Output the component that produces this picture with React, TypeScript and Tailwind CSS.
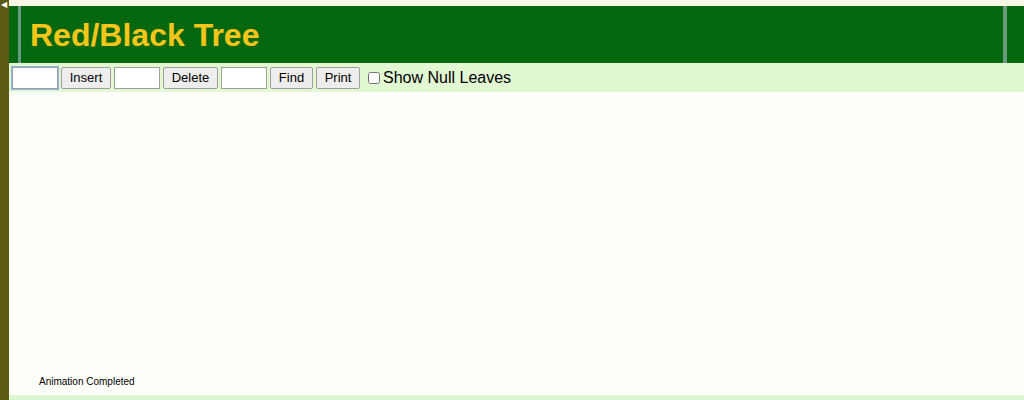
export default function App() {
  const inputCls =
    "w-[46px] h-[22px] border border-[#a0a0a0] bg-white px-1 text-[13px] outline-none";
  const btnCls =
    "h-[22px] border border-[#a0a0a0] rounded-[2px] bg-[#ededed] text-[13px] text-black leading-none";

  return (
    <div className="flex h-[400px] w-[1024px] overflow-hidden bg-[#fefefa] font-['Liberation_Sans',Arial,sans-serif]">
      <div className="relative w-[9px] shrink-0 bg-[#5c5a14]">
        <span className="absolute left-[1px] top-[1px] text-[8px] leading-none text-white">
          ◀
        </span>
      </div>
      <div className="flex flex-1 flex-col">
        <div className="h-[6px] bg-[#f8f6e4]" />
        <div className="relative flex h-[57px] items-center bg-[#05680f] pl-[21px]">
          <div className="absolute left-[9px] top-0 h-full w-[3px] bg-[#6a9a80]" />
          <div className="absolute left-[994px] top-0 h-full w-[4px] bg-[#6a9a80]" />
          <h1 className="text-[32px] font-bold leading-none text-[#f6c51a]">
            Red/Black Tree
          </h1>
        </div>
        <div className="flex h-[29px] items-center gap-[3px] bg-[#e2f8d2] pl-[3px]">
          <input className={`${inputCls} border-[#5a8ed8] shadow-[0_0_0_1px_#8fb4e6]`} />
          <button className={`${btnCls} w-[50px]`}>Insert</button>
          <input className={inputCls} />
          <button className={`${btnCls} w-[55px]`}>Delete</button>
          <input className={inputCls} />
          <button className={`${btnCls} w-[43px]`}>Find</button>
          <button className={`${btnCls} w-[44px]`}>Print</button>
          <label className="ml-[5px] flex items-center gap-[3px] text-[16px] text-black">
            <input type="checkbox" className="h-[12px] w-[12px]" />
            Show Null Leaves
          </label>
        </div>
        <div className="flex flex-1 flex-col justify-end bg-[#fefefa] pb-[6px] pl-[30px]">
          <span className="text-[10px] text-black">Animation Completed</span>
        </div>
        <div className="h-[5px] bg-[#dcf6d0]" />
      </div>
    </div>
  );
}
